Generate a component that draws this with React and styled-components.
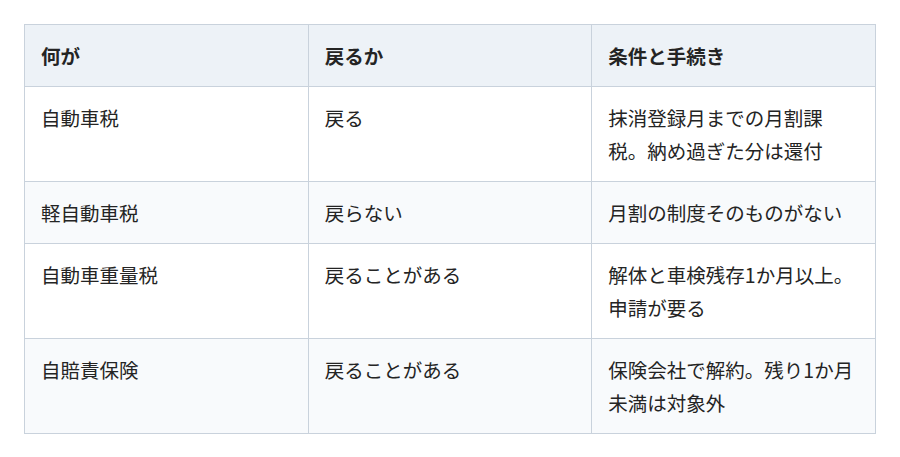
import * as React from 'react'
import styled, { createGlobalStyle } from 'styled-components'

const GlobalStyle = createGlobalStyle`
  html, body {
    margin: 0;
    padding: 0;
    background: #ffffff;
  }
  body {
    font-family: "Noto Sans CJK JP", "Noto Sans", sans-serif;
    color: #242424;
  }
`

const Page = styled.div`
  padding: 24px;
`

const Table = styled.table`
  width: 852px;
  table-layout: fixed;
  border-collapse: collapse;
  border: 1px solid #c9d2dc;
  font-size: 19.5px;
  line-height: 33px;
`

const HeadCell = styled.th`
  text-align: left;
  font-weight: 700;
  padding: 14px 16px;
  background: #edf2f7;
  border: 1px solid #c9d2dc;
  vertical-align: top;
`

const Row = styled.tr`
  background: ${props => (props.$striped ? '#f8fafc' : '#ffffff')};
`

const Cell = styled.td`
  padding: 14px 16px;
  border: 1px solid #c9d2dc;
  vertical-align: top;
  line-break: strict;
`

const rows = [
  ['自動車税', '戻る', '抹消登録月までの月割課税。納め過ぎた分は還付'],
  ['軽自動車税', '戻らない', '月割の制度そのものがない'],
  ['自動車重量税', '戻ることがある', '解体と車検残存1か月以上。申請が要る'],
  ['自賠責保険', '戻ることがある', '保険会社で解約。残り1か月未満は対象外'],
]

export default function App() {
  return (
    <Page>
      <GlobalStyle />
      <Table>
        <thead>
          <tr>
            <HeadCell>何が</HeadCell>
            <HeadCell>戻るか</HeadCell>
            <HeadCell>条件と手続き</HeadCell>
          </tr>
        </thead>
        <tbody>
          {rows.map((r, i) => (
            <Row key={r[0]} $striped={i % 2 === 1}>
              {r.map(text => <Cell key={text}>{text}</Cell>)}
            </Row>
          ))}
        </tbody>
      </Table>
    </Page>
  )
}
